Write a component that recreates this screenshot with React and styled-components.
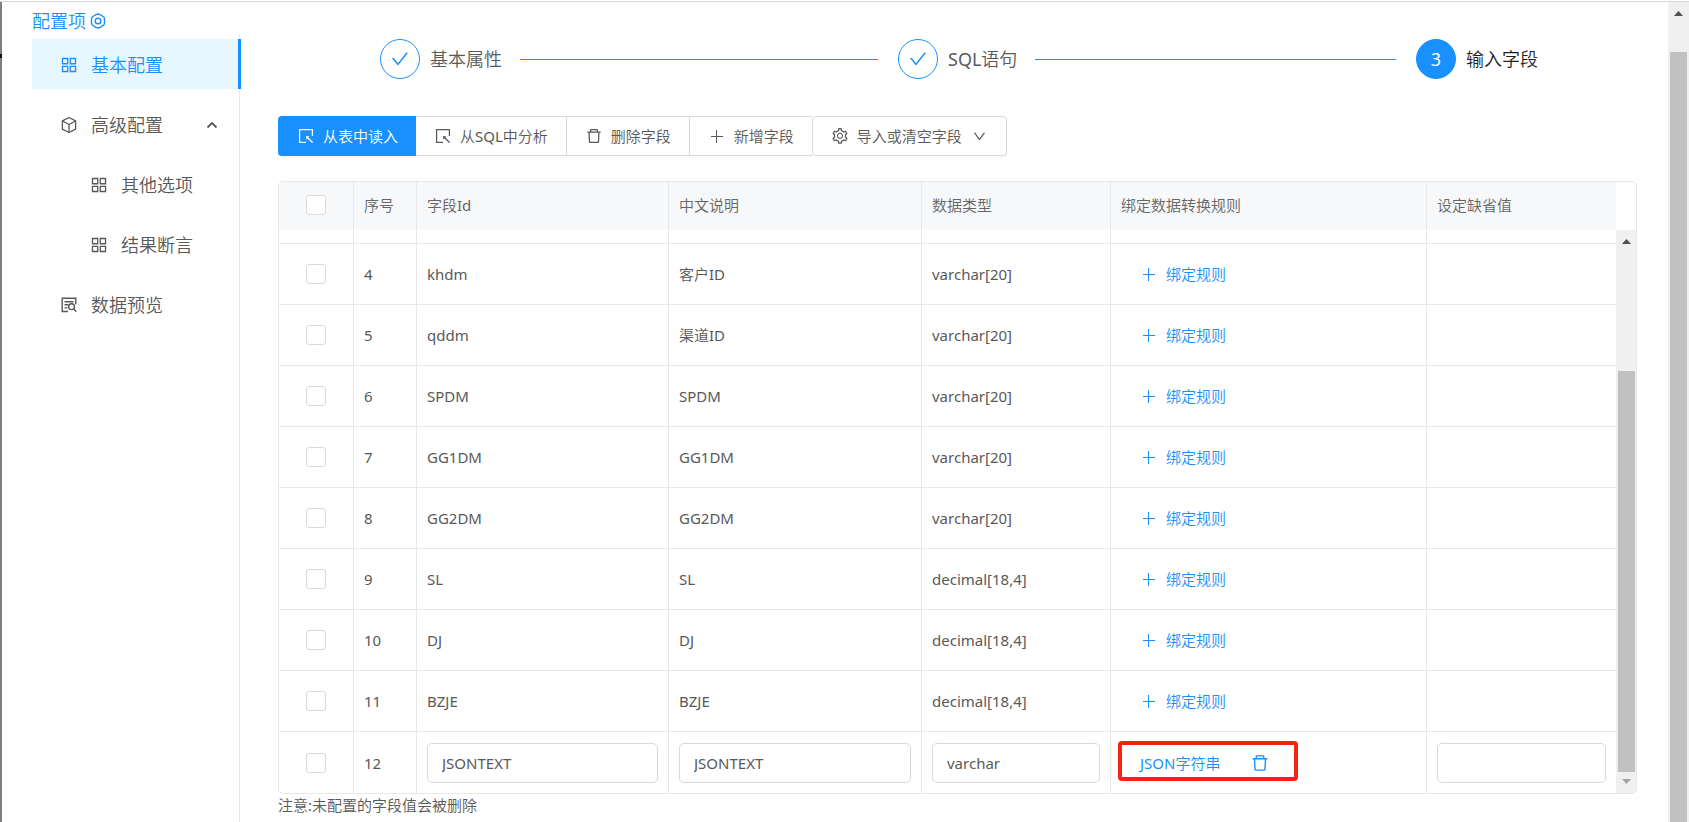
import React from "react";
import styled, { createGlobalStyle } from "styled-components";
import {
  AiOutlineAppstore,
  AiOutlineSelect,
  AiOutlineDelete,
  AiOutlineSetting,
  AiOutlineDown,
  AiOutlineCheck,
} from "react-icons/ai";

const blue = "#1890ff";
const line = "#e8e8e8";
const edge = "#d9d9d9";
const text = "#595959";

const GlobalStyle = createGlobalStyle`
  * { box-sizing: border-box; }
  body {
    margin: 0;
    background: #fff;
    color: ${text};
    font: 400 15px/24px "Noto Sans", "Noto Sans CJK SC DemiLight", "Noto Sans CJK SC", sans-serif;
  }
  button, input {
    font: inherit;
    color: inherit;
  }
  svg { flex: none; display: block; }
`;

const Page = styled.div`
  display: flex;
  height: 100vh;
  overflow: hidden;
  border-top: 1px solid #fff;
  box-shadow: inset 0 1px 0 ${edge};
`;

const WindowEdge = styled.div`
  width: 2px;
  flex: none;
  margin-top: 1px;
  background: linear-gradient(#7f7f7f 52px, #111 52px, #111 56px, #7f7f7f 56px);
`;

const Sidebar = styled.aside`
  width: 238px;
  flex: none;
  display: flex;
  flex-direction: column;
  padding-left: 30px;
`;

const SidebarTitle = styled.a`
  display: flex;
  align-items: center;
  gap: 3px;
  height: 33px;
  padding-top: 6px;
  color: ${blue};
  font-size: 18px;
  text-decoration: none;
`;

const Menu = styled.nav`
  flex: 1;
  padding-top: 5px;
  border-right: 1px solid ${line};
`;

const MenuItem = styled.a`
  display: flex;
  align-items: center;
  gap: 12px;
  height: 50px;
  margin: 0 -2px 10px 0;
  padding: 1px 20px 0 ${(p) => (p.$nested ? 57 : 27)}px;
  border-right: 3px solid ${(p) => (p.$active ? blue : "transparent")};
  background: ${(p) => (p.$active ? "#e6f7ff" : "transparent")};
  color: ${(p) => (p.$active ? blue : text)};
  font-size: 18px;
  text-decoration: none;
`;

const MenuLabel = styled.span`
  flex: 1;
`;

const Main = styled.main`
  flex: 1;
  min-width: 0;
  padding: 38px 31px 0 38px;
`;

const Steps = styled.ol`
  display: flex;
  margin: 0;
  padding: 0 99px 0 102px;
  list-style: none;
  font-size: 18px;
`;

const Step = styled.li`
  display: flex;
  align-items: center;
  gap: 10px;
  flex: ${(p) => (p.$last ? "none" : "1 1 0")};
  color: ${(p) => (p.$last ? "#1f1f1f" : text)};
`;

const StepDot = styled.span`
  display: flex;
  align-items: center;
  justify-content: center;
  width: 40px;
  height: 40px;
  border: 1px solid ${blue};
  border-radius: 50%;
  background: ${(p) => (p.$filled ? blue : "#fff")};
  color: ${(p) => (p.$filled ? "#fff" : blue)};
`;

const StepLine = styled.span`
  flex: 1;
  height: 1px;
  margin: 0 20px 0 8px;
  background: ${blue};
`;

const Toolbar = styled.div`
  display: flex;
  margin-top: 37px;
`;

const ToolButton = styled.button`
  display: flex;
  align-items: center;
  gap: 8px;
  height: 40px;
  padding: 0 18px;
  border: 1px solid ${(p) => (p.$primary ? blue : edge)};
  border-left-width: ${(p) => (p.$primary || p.$menu ? 1 : 0)}px;
  border-right-width: ${(p) => (p.$joined ? 0 : 1)}px;
  border-radius: ${(p) => (p.$primary ? "4px 0 0 4px" : p.$menu ? "4px" : 0)};
  background: ${(p) => (p.$primary ? blue : "#fff")};
  color: ${(p) => (p.$primary ? "#fff" : text)};
  white-space: nowrap;
  box-shadow: 0 2px 0 rgba(0, 0, 0, 0.02);
`;

const MenuArrow = styled.span`
  padding: 0 1px 0 2px;
`;

const GridFrame = styled.div`
  display: flex;
  margin-top: 25px;
  border: 1px solid ${line};
  border-radius: 5px;
  overflow: hidden;
`;

const Grid = styled.table`
  flex: 1;
  min-width: 0;
  width: 100%;
  table-layout: fixed;
  border-collapse: separate;
  border-spacing: 0;
`;

const HeadCell = styled.th`
  height: 48px;
  padding: 0 10px 2px;
  border-right: ${(p) => (p.$last ? 0 : 1)}px solid ${line};
  background: #f7f8fa;
  font-weight: 400;
  color: #666;
  text-align: left;
`;

const Cell = styled.td`
  position: relative;
  height: ${(p) => (p.$short ? 14 : 61)}px;
  padding: 0 10px;
  border-right: ${(p) => (p.$last ? 0 : 1)}px solid ${line};
  border-bottom: ${(p) => (p.$bottom ? 0 : 1)}px solid ${line};
`;

const CheckBox = styled.input`
  appearance: none;
  display: block;
  width: 20px;
  height: 20px;
  margin: 0 auto;
  border: 1px solid ${edge};
  border-radius: 3px;
  background: #fff;
`;

const TextField = styled.input`
  display: block;
  width: 100%;
  height: 40px;
  padding: 0 14px;
  border: 1px solid ${edge};
  border-radius: 5px;
  background: #fff;
`;

const RuleRow = styled.div`
  display: flex;
  align-items: center;
  gap: 30px;
  padding-left: 19px;
`;

const RuleButton = styled.button`
  display: flex;
  align-items: center;
  gap: 8px;
  padding: 0;
  border: 0;
  background: none;
  color: ${blue};
`;

const Highlight = styled.div`
  position: absolute;
  top: 9px;
  left: 7px;
  width: 180px;
  height: 40px;
  border: 4px solid #ff1f10;
  border-radius: 4px;
  pointer-events: none;
`;

const Rail = styled.div`
  display: flex;
  flex-direction: column;
  align-items: center;
  width: 21px;
  flex: none;
  margin-top: ${(p) => (p.$inner ? 48 : 1)}px;
  background: #f0f0f0;
`;

const RailArrow = styled.svg`
  width: 21px;
  height: 21px;
`;

const RailThumb = styled.div`
  flex: 1;
  width: 17px;
  margin-top: ${(p) => (p.$offset)}px;
  background: #c1c1c1;
`;

const Note = styled.p`
  margin: 0;
  line-height: 22px;
`;

const HexIcon = () => (
  <svg width="18" height="18" viewBox="0 0 18 18" fill="none" stroke="currentColor" strokeWidth="1.4" strokeLinejoin="round">
    <path d="M9 2l2.200.7 3.600 2.300.7 1.400v5.200l-.7 1.400-3.600 2.300L9 16l-2.200-.7-3.600-2.300-.7-1.400V6.400L3.200 5l3.600-2.300z" />
    <circle cx="9" cy="9" r="2.8" />
  </svg>
);

const CubeIcon = () => (
  <svg width="20" height="20" viewBox="0 0 20 20" fill="none" stroke="currentColor" strokeWidth="1.3" strokeLinejoin="round">
    <path d="M10 2.500l6.600 3.300v8.400L10 17.500l-6.600-3.300V5.800z" />
    <path d="M3.600 6L10 9.500 16.400 6M10 9.500v7.800" />
  </svg>
);

const PreviewIcon = () => (
  <svg width="20" height="20" viewBox="0 0 20 20" fill="none" stroke="currentColor" strokeWidth="1.4">
    <path d="M9 16.500H3.200V3.200h13.600v6M5.500 6.700h9M5.500 9.800h4M5.500 12.900h3" />
    <circle cx="12.600" cy="11.700" r="2.900" />
    <path d="M14.600 13.800l2.700 3" />
  </svg>
);

const CaretUpIcon = () => (
  <svg width="12" height="12" viewBox="0 0 12 12" fill="none" stroke="currentColor" strokeWidth="1.8">
    <path d="M1.500 8.500L6 4l4.500 4.500" />
  </svg>
);

const PlusIcon = () => (
  <svg width="18" height="18" viewBox="0 0 18 18" fill="none" stroke="currentColor" shapeRendering="crispEdges">
    <path d="M3 9.500h12M8.500 3v13" />
  </svg>
);

const rows = [
  ["4", "khdm", "客户ID", "varchar[20]"],
  ["5", "qddm", "渠道ID", "varchar[20]"],
  ["6", "SPDM", "SPDM", "varchar[20]"],
  ["7", "GG1DM", "GG1DM", "varchar[20]"],
  ["8", "GG2DM", "GG2DM", "varchar[20]"],
  ["9", "SL", "SL", "decimal[18,4]"],
  ["10", "DJ", "DJ", "decimal[18,4]"],
  ["11", "BZJE", "BZJE", "decimal[18,4]"],
];

const widths = [75, 63, 252, 253, 189, 316, 189];
const headings = ["序号", "字段Id", "中文说明", "数据类型", "绑定数据转换规则", "设定缺省值"];

export default function App() {
  return (
    <>
      <GlobalStyle />
      <Page>
        <WindowEdge />
        <Sidebar>
          <SidebarTitle href="#config">
            配置项
            <HexIcon />
          </SidebarTitle>
          <Menu>
            <MenuItem href="#basic" $active>
              <AiOutlineAppstore size={20} />
              <MenuLabel>基本配置</MenuLabel>
            </MenuItem>
            <MenuItem href="#advanced">
              <CubeIcon />
              <MenuLabel>高级配置</MenuLabel>
              <CaretUpIcon />
            </MenuItem>
            <MenuItem href="#other" $nested>
              <AiOutlineAppstore size={20} />
              <MenuLabel>其他选项</MenuLabel>
            </MenuItem>
            <MenuItem href="#assert" $nested>
              <AiOutlineAppstore size={20} />
              <MenuLabel>结果断言</MenuLabel>
            </MenuItem>
            <MenuItem href="#preview">
              <PreviewIcon />
              <MenuLabel>数据预览</MenuLabel>
            </MenuItem>
          </Menu>
        </Sidebar>

        <Main>
          <Steps>
            <Step>
              <StepDot><AiOutlineCheck size={20} /></StepDot>
              基本属性
              <StepLine />
            </Step>
            <Step>
              <StepDot><AiOutlineCheck size={20} /></StepDot>
              SQL语句
              <StepLine />
            </Step>
            <Step $last>
              <StepDot $filled>3</StepDot>
              输入字段
            </Step>
          </Steps>

          <Toolbar>
            <ToolButton type="button" $primary $joined>
              <AiOutlineSelect size={18} />
              从表中读入
            </ToolButton>
            <ToolButton type="button">
              <AiOutlineSelect size={18} />
              从SQL中分析
            </ToolButton>
            <ToolButton type="button">
              <AiOutlineDelete size={18} />
              删除字段
            </ToolButton>
            <ToolButton type="button" $joined>
              <PlusIcon />
              新增字段
            </ToolButton>
            <ToolButton type="button" $menu>
              <AiOutlineSetting size={18} />
              导入或清空字段
              <MenuArrow>
                <AiOutlineDown size={15} />
              </MenuArrow>
            </ToolButton>
          </Toolbar>

          <GridFrame>
            <Grid>
              <colgroup>
                {widths.map((w, i) => (
                  <col key={i} width={w} />
                ))}
              </colgroup>
              <thead>
                <tr>
                  <HeadCell>
                    <CheckBox type="checkbox" aria-label="全选" />
                  </HeadCell>
                  {headings.map((h, i) => (
                    <HeadCell key={h} $last={i === 5}>{h}</HeadCell>
                  ))}
                </tr>
              </thead>
              <tbody>
                <tr aria-hidden="true">
                  {widths.map((w, i) => (
                    <Cell key={i} $short $last={i === 6} />
                  ))}
                </tr>
                {rows.map(([no, id, label, type]) => (
                  <tr key={no}>
                    <Cell>
                      <CheckBox type="checkbox" aria-label={id} />
                    </Cell>
                    <Cell>{no}</Cell>
                    <Cell>{id}</Cell>
                    <Cell>{label}</Cell>
                    <Cell>{type}</Cell>
                    <Cell>
                      <RuleRow>
                        <RuleButton type="button">
                          <PlusIcon />
                          绑定规则
                        </RuleButton>
                      </RuleRow>
                    </Cell>
                    <Cell $last />
                  </tr>
                ))}
                <tr>
                  <Cell $bottom>
                    <CheckBox type="checkbox" aria-label="JSONTEXT" />
                  </Cell>
                  <Cell $bottom>12</Cell>
                  <Cell $bottom>
                    <TextField aria-label="字段Id" defaultValue="JSONTEXT" />
                  </Cell>
                  <Cell $bottom>
                    <TextField aria-label="中文说明" defaultValue="JSONTEXT" />
                  </Cell>
                  <Cell $bottom>
                    <TextField aria-label="数据类型" defaultValue="varchar" />
                  </Cell>
                  <Cell $bottom>
                    <RuleRow>
                      <RuleButton type="button">JSON字符串</RuleButton>
                      <RuleButton type="button" aria-label="删除规则">
                        <AiOutlineDelete size={20} />
                      </RuleButton>
                    </RuleRow>
                    <Highlight />
                  </Cell>
                  <Cell $bottom $last>
                    <TextField aria-label="设定缺省值" />
                  </Cell>
                </tr>
              </tbody>
            </Grid>
            <Rail $inner aria-hidden="true">
              <RailArrow viewBox="0 0 21 21">
                <path d="M6 14h9l-4.500-5z" fill="#505050" />
              </RailArrow>
              <RailThumb $offset={120} />
              <RailArrow viewBox="0 0 21 21">
                <path d="M6 7h9l-4.500 5z" fill="#a3a3a3" />
              </RailArrow>
            </Rail>
          </GridFrame>
          <Note>注意:未配置的字段值会被删除</Note>
        </Main>

        <Rail aria-hidden="true">
          <RailArrow viewBox="0 0 21 21">
            <path d="M6 14h9l-4.500-5z" fill="#505050" />
          </RailArrow>
          <RailThumb $offset={29} />
        </Rail>
      </Page>
    </>
  );
}
